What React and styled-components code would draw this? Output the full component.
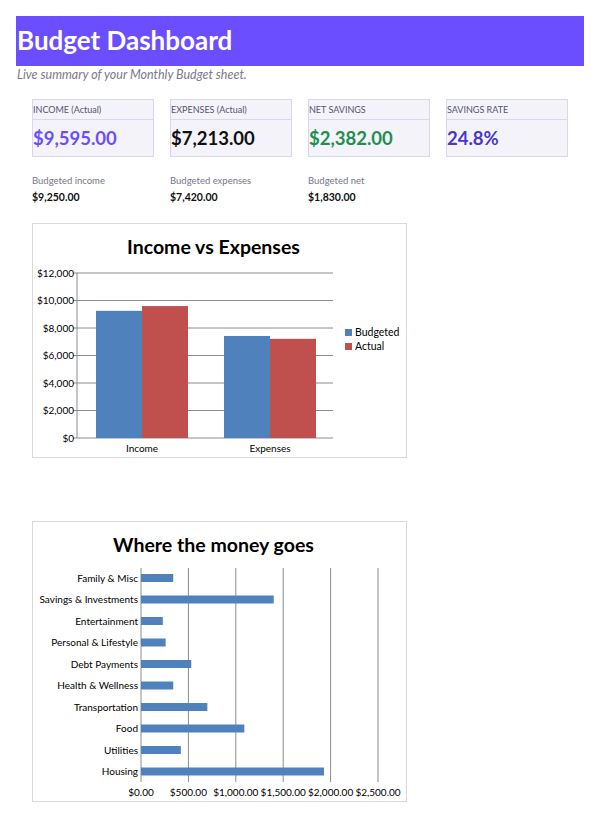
import React from "react";
import styled, { createGlobalStyle } from "styled-components";

const Global = createGlobalStyle`
  body { margin: 0; background: #fff; font-family: Lato, "Open Sans", sans-serif; }
`;
const Page = styled.div`padding: 16px 16px 0 16px; width: 568px;`;
const Header = styled.h1`
  margin: 0; height: 50px; background: #6b4eff; color: #fff;
  font-size: 26px; font-weight: 700; line-height: 48px; padding-left: 1px;
`;
const Sub = styled.div`
  font-style: italic; color: #7a7a8a; font-size: 12.5px; margin-top: 1px; padding-left: 1px;
`;
const Cards = styled.div`
  display: grid; grid-template-columns: repeat(4, 122px); gap: 16px; margin: 17px 0 0 16px;
`;
const Card = styled.div`
  background: #f4f3fa; border: 1px solid #d9d7ee; height: 56px; display: flex; flex-direction: column;
`;
const CardLabel = styled.div`
  height: 19px; border-bottom: 1px solid #d9d7ee; font-size: 9px; color: #55536a;
  line-height: 19px; padding-left: 0px;
`;
const CardValue = styled.div`
  flex: 1; font-size: 18.5px; font-weight: 700; color: ${p => p.$c}; padding-top: 7px;
`;
const Budgets = styled.div`
  display: grid; grid-template-columns: repeat(4, 122px); gap: 16px; margin: 18px 0 0 16px;
`;
const BLabel = styled.div`font-size: 9.5px; color: #77768a; line-height: 12px;`;
const BValue = styled.div`font-size: 10.5px; font-weight: 700; color: #111; margin-top: 4px;`;
const ChartBox = styled.div`
  margin: ${p => p.$mt}px 0 0 16px; width: 373px; border: 1px solid #d9d9d9; background: #fff;
`;
const ChartTitle = styled.div`
  text-align: center; font-size: 19.5px; font-weight: 700; color: #000;
  padding-top: 10px; line-height: 26px; padding-right: 12px;
`;
const Svg = styled.svg`display: block;`;

const BLUE = "#4f81bd", RED = "#c0504d";

function BarChart() {
  const ox = 33, oy = 260;
  const y0 = 438 - oy, x0 = 77 - ox, x1 = 333 - ox;
  const scale = 165 / 12000;
  const ticks = [0, 2000, 4000, 6000, 8000, 10000, 12000];
  const bars = [
    [96, 9250, BLUE], [142, 9595, RED], [224, 7420, BLUE], [270, 7213, RED],
  ];
  return (
    <Svg width="373" height="197" fontFamily="Lato, sans-serif">
      {ticks.map(t => {
        const y = y0 - t * scale;
        return (
          <g key={t}>
            <line x1={x0 - 4} x2={x1} y1={y} y2={y} stroke="#8c8c8c" strokeWidth="1" />
            <text x={x0 - 3} y={y + 3.5} fontSize="10" textAnchor="end" fill="#000">
              ${t.toLocaleString("en-US")}
            </text>
          </g>
        );
      })}
      <line x1={x0} x2={x0} y1={y0 - 165} y2={y0} stroke="#8c8c8c" />
      {bars.map(([x, v, c], i) => (
        <rect key={i} x={x - ox} y={y0 - v * scale} width="46" height={v * scale} fill={c} />
      ))}
      <text x={142 - ox} y={448 - oy + 3.5} fontSize="10" textAnchor="middle">Income</text>
      <text x={270 - ox} y={448 - oy + 3.5} fontSize="10" textAnchor="middle">Expenses</text>
      <rect x={345 - ox} y={329 - oy} width="7" height="7" fill={BLUE} />
      <text x={355 - ox} y={336 - oy} fontSize="10.5">Budgeted</text>
      <rect x={345 - ox} y={343 - oy} width="7" height="7" fill={RED} />
      <text x={355 - ox} y={350 - oy} fontSize="10.5">Actual</text>
    </Svg>
  );
}

const cats = [
  ["Family & Misc", 340], ["Savings & Investments", 1400], ["Entertainment", 230],
  ["Personal & Lifestyle", 260], ["Debt Payments", 530], ["Health & Wellness", 340],
  ["Transportation", 700], ["Food", 1090], ["Utilities", 420], ["Housing", 1930],
];

function HBarChart() {
  const ox = 33, oy = 559;
  const x0 = 141 - ox, per = 237 / 2500;
  const top = 569 - oy, bot = 783 - oy;
  const grid = [0, 500, 1000, 1500, 2000, 2500];
  return (
    <Svg width="373" height="243" fontFamily="Lato, sans-serif">
      {grid.map(g => (
        <g key={g}>
          <line x1={x0 + g * per} x2={x0 + g * per} y1={top} y2={bot} stroke="#8c8c8c" />
          <text x={x0 + g * per} y={797 - oy} fontSize="10" textAnchor="middle">
            ${g.toLocaleString("en-US", { minimumFractionDigits: 2 })}
          </text>
        </g>
      ))}
      {cats.map(([n, v], i) => {
        const cy = 579 - oy + i * 21.5;
        return (
          <g key={n}>
            <text x={138 - ox} y={cy + 3.5} fontSize="10" textAnchor="end">{n}</text>
            <rect x={x0} y={cy - 4} width={v * per} height="8" fill={BLUE} />
          </g>
        );
      })}
    </Svg>
  );
}

export default function App() {
  return (
    <>
      <Global />
      <Page>
        <Header>Budget Dashboard</Header>
        <Sub>Live summary of your Monthly Budget sheet.</Sub>
        <Cards>
          <Card><CardLabel>INCOME (Actual)</CardLabel><CardValue $c="#6b4eff">$9,595.00</CardValue></Card>
          <Card><CardLabel>EXPENSES (Actual)</CardLabel><CardValue $c="#111">$7,213.00</CardValue></Card>
          <Card><CardLabel>NET SAVINGS</CardLabel><CardValue $c="#1e8f4e">$2,382.00</CardValue></Card>
          <Card><CardLabel>SAVINGS RATE</CardLabel><CardValue $c="#4a35d0">24.8%</CardValue></Card>
        </Cards>
        <Budgets>
          <div><BLabel>Budgeted income</BLabel><BValue>$9,250.00</BValue></div>
          <div><BLabel>Budgeted expenses</BLabel><BValue>$7,420.00</BValue></div>
          <div><BLabel>Budgeted net</BLabel><BValue>$1,830.00</BValue></div>
        </Budgets>
        <ChartBox $mt={20}>
          <ChartTitle>Income vs Expenses</ChartTitle>
          <BarChart />
        </ChartBox>
        <ChartBox $mt={63}>
          <ChartTitle>Where the money goes</ChartTitle>
          <HBarChart />
        </ChartBox>
      </Page>
    </>
  );
}
